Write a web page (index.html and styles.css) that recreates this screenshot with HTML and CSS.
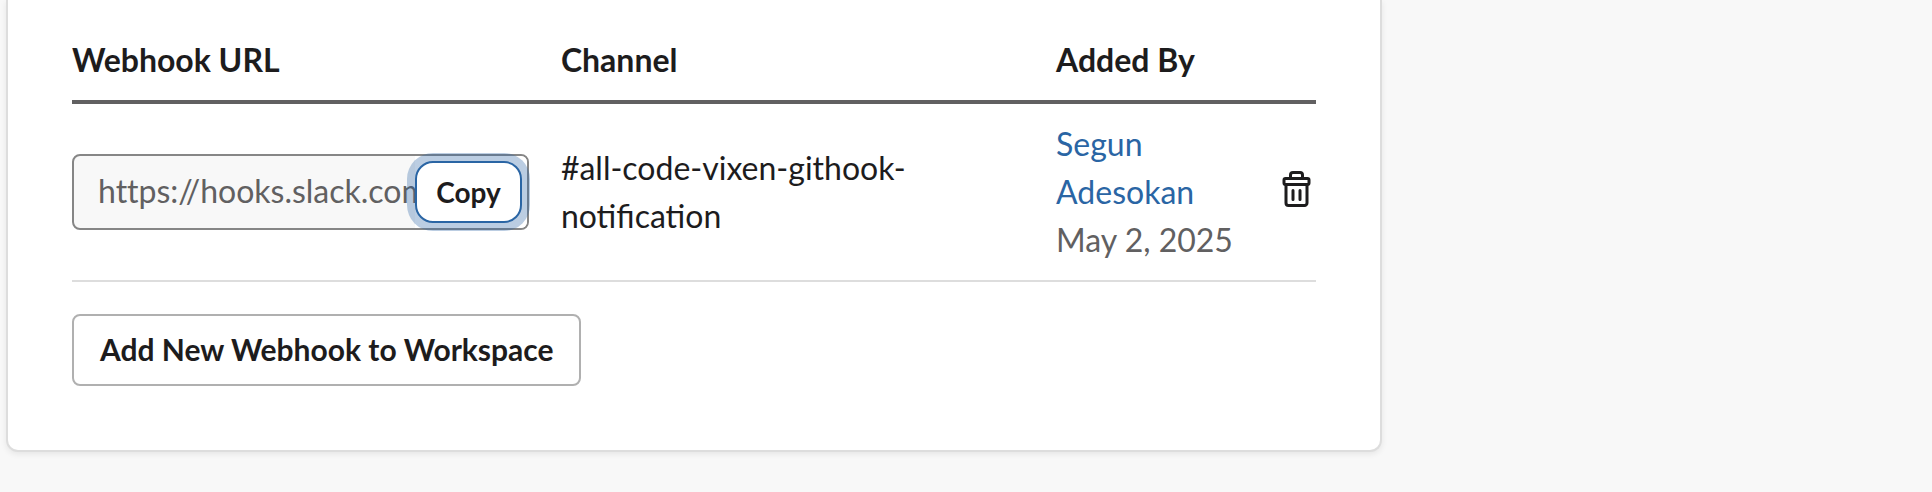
FILE: index.html
```html
<!DOCTYPE html>
<html lang="en">
<head>
<meta charset="utf-8">
<title>Webhook URLs</title>
<link rel="stylesheet" href="styles.css">
</head>
<body>
<main class="card">
  <table class="webhooks">
    <colgroup>
      <col class="col-url">
      <col class="col-channel">
      <col class="col-author">
      <col class="col-action">
    </colgroup>
    <thead>
      <tr>
        <th scope="col">Webhook URL</th>
        <th scope="col">Channel</th>
        <th scope="col">Added By</th>
        <td></td>
      </tr>
    </thead>
    <tbody>
      <tr>
        <td>
          <div class="url-field">
            <input class="url-input" type="text" readonly aria-label="Webhook URL" value="https://hooks.slack.com/services/">
            <div class="copy-slot"><button class="copy-button" type="button">Copy</button></div>
          </div>
        </td>
        <td>#all-code-vixen-githook-notification</td>
        <td>
          <a class="author" href="#">Segun Adesokan</a>
          <div class="date">May 2, 2025</div>
        </td>
        <td class="action">
          <button class="delete-button" type="button" aria-label="Delete webhook">
            <svg class="trash" viewBox="0 0 40 40" aria-hidden="true">
              <path d="M14.5 8.5V6a2.5 2.5 0 0 1 2.5-2.5h7A2.5 2.5 0 0 1 26.5 6v2.5"/>
              <rect x="8" y="9.500" width="25" height="6" rx="1.500"/>
              <path d="M10 15.500V34a2.500 2.500 0 0 0 2.500 2.500h16A2.500 2.500 0 0 0 31 34V15.500M17 21.500v9M24 21.500v9"/>
            </svg>
          </button>
        </td>
      </tr>
    </tbody>
  </table>
  <button class="add-button" type="button">Add New Webhook to Workspace</button>
</main>
</body>
</html>
```
FILE: styles.css
```css
* {
  box-sizing: border-box;
}

body {
  margin: 0;
  padding: 0 6px 40px;
  background: #f8f8f8;
  color: #1d1c1d;
  font-family: Lato, "Liberation Sans", sans-serif;
  font-size: 32px;
  line-height: 48px;
}

button,
input {
  margin: 0;
  font-family: inherit;
  color: inherit;
}

.card {
  max-width: 1376px;
  padding: 20px 64px 64px;
  background: #fff;
  border: 2px solid #ddd;
  border-top: 0;
  border-radius: 0 0 12px 12px;
  box-shadow: 0 2px 6px rgba(0, 0, 0, 0.08);
}

.webhooks {
  width: 100%;
  margin-bottom: 32px;
  table-layout: fixed;
  border-collapse: separate;
  border-spacing: 0;
}

.col-url {
  width: 39.3%;
}

.col-channel {
  width: 39.8%;
}

.col-action {
  width: 48px;
}

.webhooks th,
.webhooks td {
  padding: 16px 32px 16px 0;
  text-align: left;
  vertical-align: middle;
  border-bottom: 2px solid #ddd;
}

.webhooks thead th,
.webhooks thead td {
  border-bottom: 4px solid #616061;
}

.webhooks th {
  font-weight: 700;
}

.url-field {
  position: relative;
}

.url-input {
  display: block;
  width: 100%;
  height: 76px;
  padding: 0 24px 4px;
  border: 2px solid #868686;
  border-radius: 8px;
  background: #f8f8f8;
  color: #616061;
  font-size: 32px;
  font-variant-ligatures: none;
}

.copy-slot {
  position: absolute;
  top: 2px;
  right: 2px;
  bottom: 2px;
  display: flex;
  align-items: center;
  padding-right: 5px;
  border-radius: 0 6px 6px 0;
  background: #fff;
}

.copy-button {
  height: 62px;
  padding: 0 19px;
  border: 2px solid #2a65a4;
  border-radius: 18px;
  background: #fff;
  box-shadow: 0 0 0 8px rgba(42, 101, 164, 0.32);
  font-size: 28px;
  font-weight: 700;
}

.author {
  color: #2a65a4;
  text-decoration: none;
}

.date {
  color: #616061;
}

.webhooks .action {
  padding-right: 0;
}

.delete-button {
  display: block;
  margin-left: auto;
  padding: 0 0 6px;
  border: 0;
  background: none;
}

.trash {
  display: block;
  width: 40px;
  height: 40px;
  fill: none;
  stroke: #1d1c1d;
  stroke-width: 3;
  stroke-linecap: round;
  stroke-linejoin: round;
}

.add-button {
  display: block;
  height: 72px;
  padding: 0 25px 2px 26px;
  border: 2px solid #b0b0b0;
  border-radius: 8px;
  background: #fff;
  font-size: 30px;
  font-weight: 700;
}
```
